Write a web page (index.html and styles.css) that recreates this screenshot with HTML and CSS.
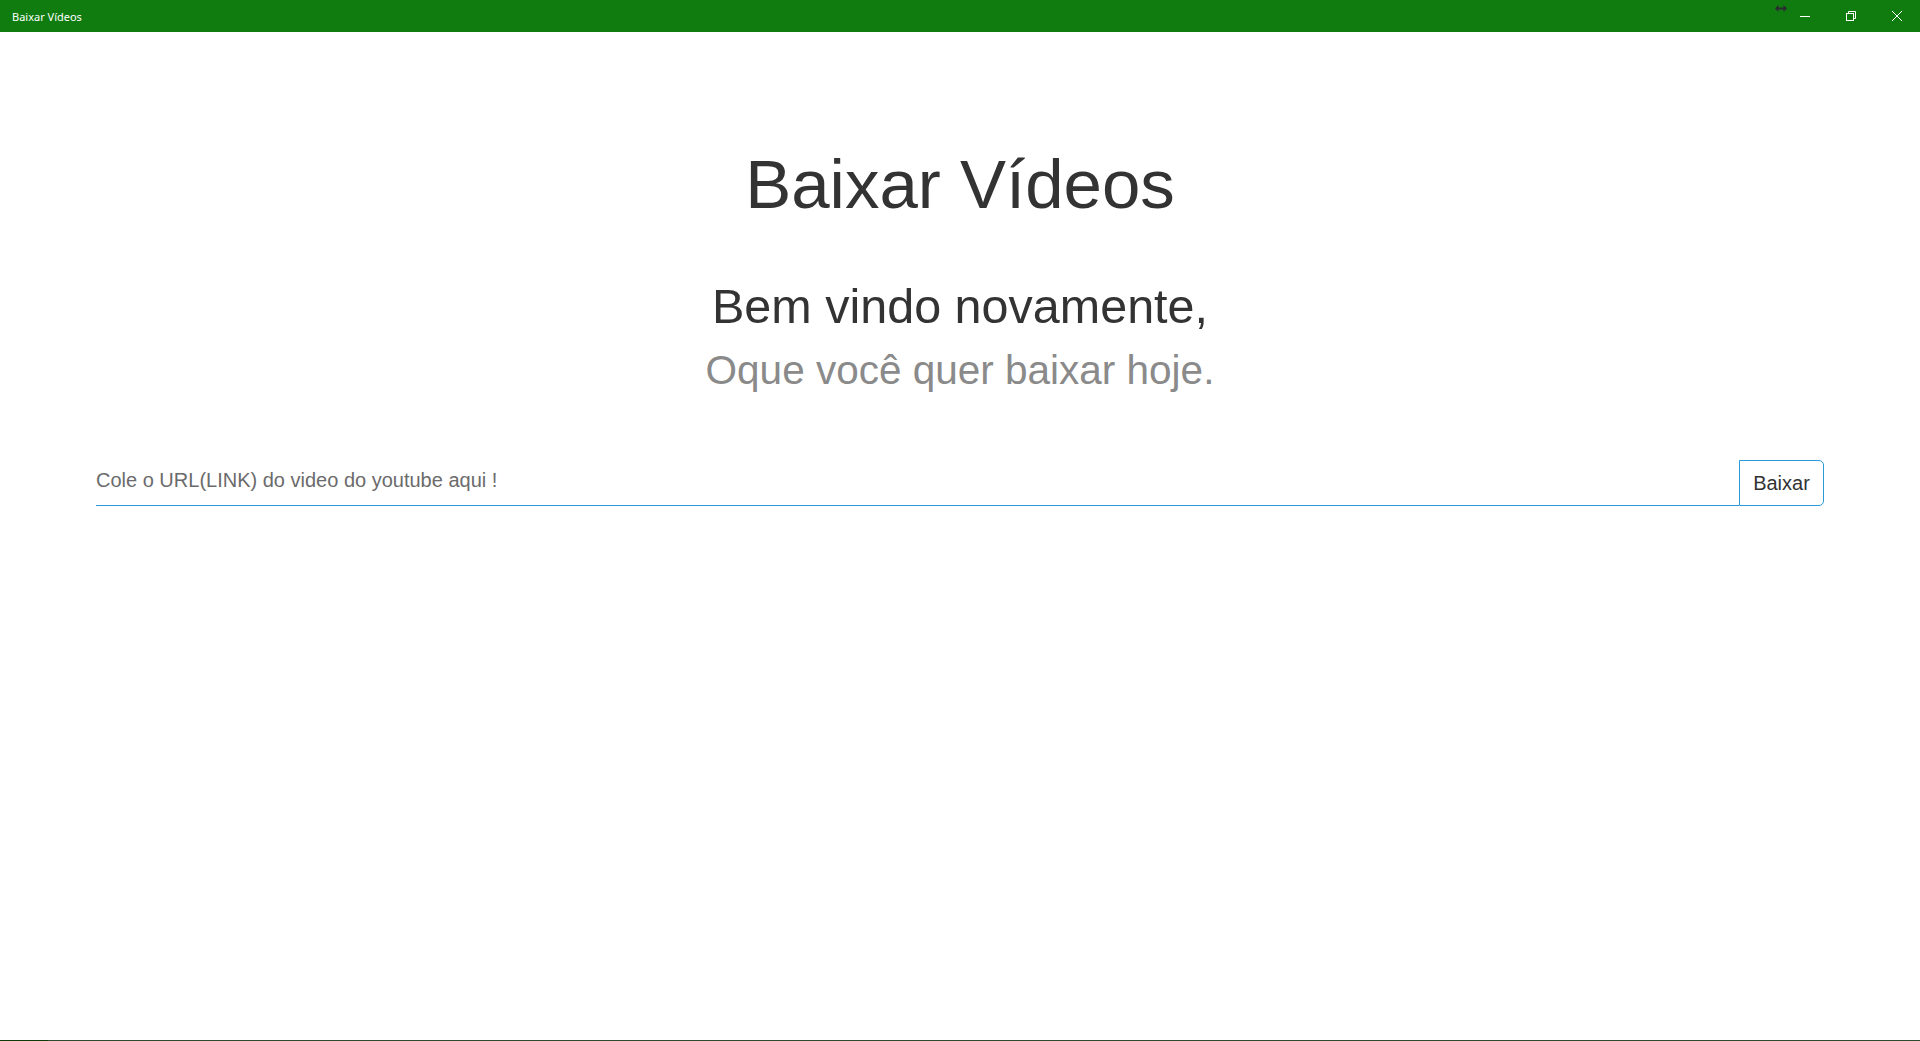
FILE: index.html
```html
<!DOCTYPE html>
<html lang="pt">
<head>
<meta charset="utf-8">
<title>Baixar Vídeos</title>
<link rel="stylesheet" href="styles.css">
</head>
<body>
<div class="window">
  <header class="titlebar">
    <span class="app-title">Baixar Vídeos</span>
    <div class="controls">
      <button class="ctl" aria-label="Minimizar">
        <svg width="10" height="10" viewBox="0 0 10 10"><path d="M0 5.5H10" stroke="#fff" stroke-width="1"/></svg>
      </button>
      <button class="ctl" aria-label="Restaurar">
        <svg width="10" height="10" viewBox="0 0 10 10" fill="none" stroke="#fff" stroke-width="1"><rect x="0.5" y="2.5" width="7" height="7"/><path d="M2.5 2.5V0.5H9.5V7.5H7.5"/></svg>
      </button>
      <button class="ctl" aria-label="Fechar">
        <svg width="10" height="10" viewBox="0 0 10 10" stroke="#fff" stroke-width="1"><path d="M0 0L10 10M10 0L0 10"/></svg>
      </button>
    </div>
    <svg class="cursor" width="12" height="7" viewBox="0 0 12 7"><path d="M0 3.5L3.5 0V2.5H8.5V0L12 3.5L8.5 7V4.5H3.5V7Z" fill="#2b2b33"/></svg>
  </header>
  <main class="content">
    <h1 class="heading">Baixar Vídeos</h1>
    <h2 class="welcome">Bem vindo novamente,</h2>
    <p class="sub">Oque você quer baixar hoje.</p>
    <form class="url-row" onsubmit="return false">
      <input class="url-input" type="text" placeholder="Cole o URL(LINK) do video do youtube aqui !">
      <button class="go" type="submit">Baixar</button>
    </form>
  </main>
  <div class="bottom-line"><span class="bl-start"></span></div>
</div>
</body>
</html>
```

FILE: styles.css
```css
html, body {
  margin: 0;
  padding: 0;
  height: 100%;
  background: #fff;
}
body {
  font-family: "Liberation Sans", Arial, sans-serif;
  color: #333;
}
.window {
  height: 1041px;
  display: flex;
  flex-direction: column;
}
.titlebar {
  position: relative;
  height: 32px;
  background: #107c10;
  display: flex;
  align-items: center;
  flex-shrink: 0;
}
.app-title {
  font-family: "Noto Sans", "Open Sans", sans-serif;
  font-size: 11px;
  color: #fff;
  padding-left: 12px;
  flex: 1;
}
.controls {
  display: flex;
  height: 32px;
}
.ctl {
  width: 46px;
  height: 32px;
  border: 0;
  padding: 0;
  background: transparent;
  display: flex;
  align-items: center;
  justify-content: center;
}
.cursor {
  position: absolute;
  left: 1775px;
  top: 5px;
}
.content {
  flex: 1;
  padding: 118px 96px 0;
  display: flex;
  flex-direction: column;
  align-items: center;
}
.heading {
  margin: 0;
  font-size: 69px;
  line-height: 70px;
  font-weight: normal;
  color: #333;
}
.welcome {
  margin: 62px 0 0;
  font-size: 48.5px;
  line-height: 48px;
  font-weight: normal;
  color: #333;
}
.sub {
  margin: 20px 0 0;
  font-size: 40.5px;
  line-height: 40px;
  color: #8a8a8a;
}
.url-row {
  margin-top: 70px;
  width: 100%;
  display: flex;
}
.url-input {
  flex: 1;
  height: 46px;
  box-sizing: border-box;
  border: 0;
  border-bottom: 1px solid #2b9ad6;
  padding: 0 0 5px 0;
  font-family: "Liberation Sans", Arial, sans-serif;
  font-size: 20px;
  color: #333;
  outline: none;
  background: #fff;
}
.url-input::placeholder {
  color: #6b6b6b;
  opacity: 1;
}
.go {
  width: 85px;
  height: 46px;
  box-sizing: border-box;
  border: 1px solid #2b9ad6;
  border-radius: 0 5px 5px 0;
  background: #fff;
  font-family: "Liberation Sans", Arial, sans-serif;
  font-size: 20px;
  color: #333;
  padding: 0;
}
.bottom-line {
  height: 1px;
  background: #2f4b2f;
  display: flex;
  flex-shrink: 0;
}
.bl-start {
  width: 48px;
  background: #0b3a0b;
}
```
